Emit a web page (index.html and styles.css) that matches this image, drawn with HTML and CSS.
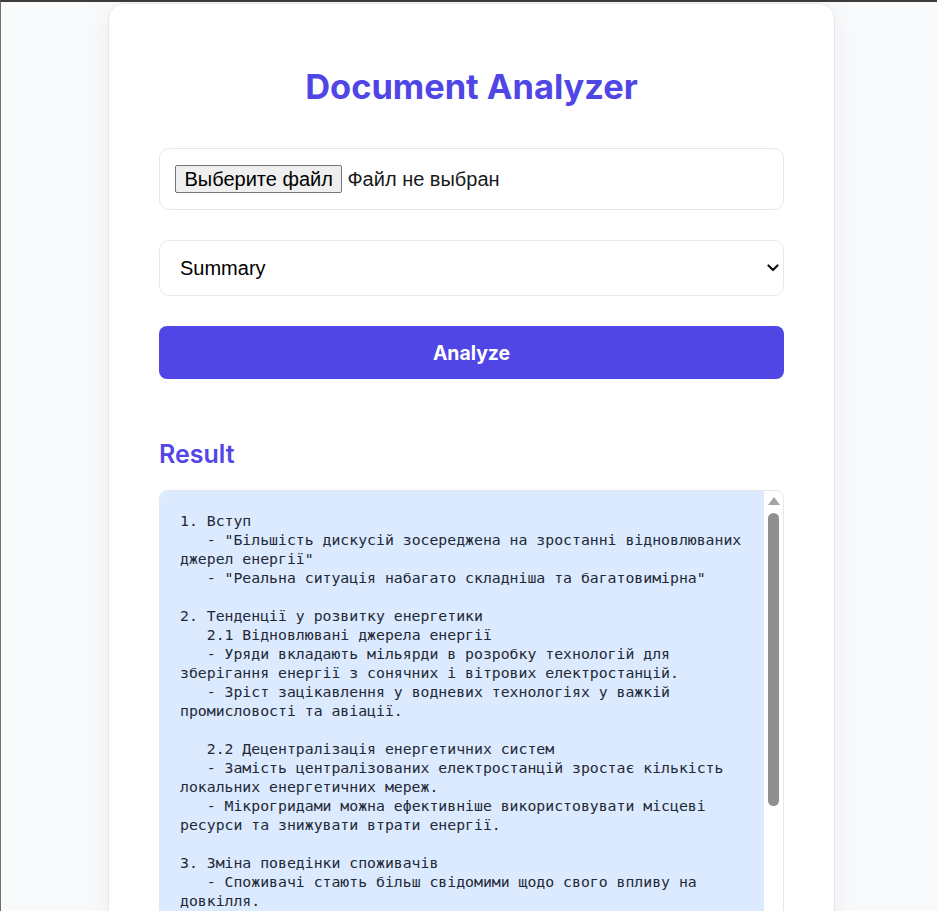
FILE: index.html
```html
<!DOCTYPE html>
<html lang="uk">
<head>
<meta charset="utf-8">
<title>Document Analyzer</title>
<link rel="stylesheet" href="styles.css">
</head>
<body>
<main class="page">
  <section class="card">
    <h1 class="title">Document Analyzer</h1>
    <div class="file-field">
      <label class="file-btn">Выберите файл<input type="file" class="file-input"></label>
      <span class="file-name">Файл не выбран</span>
    </div>
    <div class="select-wrap">
      <select class="select">
        <option>Summary</option>
        <option>Key points</option>
        <option>Outline</option>
      </select>
      <svg class="chevron" width="12" height="8" viewBox="0 0 12 8" aria-hidden="true"><path d="M1.5 1.5 L6 6 L10.5 1.5" fill="none" stroke="#111" stroke-width="2.2" stroke-linecap="round" stroke-linejoin="round"/></svg>
    </div>
    <button class="analyze" type="button">Analyze</button>
    <h2 class="result-title">Result</h2>
    <div class="result">
      <pre class="result-text">1. Вступ
   - "Більшість дискусій зосереджена на зростанні відновлюваних джерел енергії"
   - "Реальна ситуація набагато складніша та багатовимірна"

2. Тенденції у розвитку енергетики
   2.1 Відновлювані джерела енергії
   - Уряди вкладають мільярди в розробку технологій для зберігання енергії з сонячних і вітрових електростанцій.
   - Зріст зацікавлення у водневих технологіях у важкій промисловості та авіації.

   2.2 Децентралізація енергетичних систем
   - Замість централізованих електростанцій зростає кількість локальних енергетичних мереж.
   - Мікрогридами можна ефективніше використовувати місцеві ресурси та знижувати втрати енергії.

3. Зміна поведінки споживачів
   - Споживачі стають більш свідомими щодо свого впливу на довкілля.</pre>
      <div class="scrollbar" aria-hidden="true">
        <span class="scroll-arrow"></span>
        <span class="scroll-thumb"></span>
      </div>
    </div>
  </section>
</main>
</body>
</html>
```
FILE: styles.css
```css
html {
  height: 100%;
  box-sizing: border-box;
  border-top: 2px solid #3b3b3b;
  border-left: 1px solid #6f6f6f;
  background: #f9fafb;
  overflow: hidden;
}

body {
  margin: 0;
  font-family: Inter, "Noto Sans", sans-serif;
  color: #1f2937;
}

.page {
  display: flex;
  justify-content: center;
  padding: 1px 0 0 5px;
}

.card {
  width: 625px;
  padding: 50px 50px 60px;
  background: #ffffff;
  border: 1px solid #e5e7eb;
  border-radius: 16px;
  box-shadow: 0 0 30px rgba(0, 0, 0, 0.05);
  display: flex;
  flex-direction: column;
}

.title {
  margin: 13px 0 41px;
  font-size: 34.4px;
  line-height: 40px;
  font-weight: 700;
  text-align: center;
  color: #4f46e5;
}

.file-field {
  display: flex;
  align-items: center;
  gap: 5px;
  padding: 16px 15px;
  border: 1px solid #e5e7eb;
  border-radius: 10px;
  margin-bottom: 30px;
  font-family: "Liberation Sans", Arial, sans-serif;
  font-size: 20px;
  color: #1a1a1a;
}

.file-btn {
  display: inline-block;
  padding: 1px 8.5px;
  line-height: 24px;
  background: #efefef;
  border: 1px solid #767676;
  border-radius: 2px;
  color: #000;
}

.file-input {
  display: none;
}

.select-wrap {
  position: relative;
  display: flex;
  margin-bottom: 30px;
}

.select {
  flex: 1;
  height: 56px;
  margin: 0;
  padding: 0 36px 0 20px;
  border: 1px solid #e5e7eb;
  border-radius: 10px;
  background: #fff;
  appearance: none;
  -webkit-appearance: none;
  font-family: "Liberation Sans", Arial, sans-serif;
  font-size: 20px;
  color: #000;
}

.chevron {
  position: absolute;
  right: 5px;
  top: 24px;
  pointer-events: none;
}

.analyze {
  height: 53px;
  border: none;
  border-radius: 8px;
  background: #4f46e5;
  color: #fff;
  font-family: Inter, sans-serif;
  font-size: 19.4px;
  font-weight: 700;
}

.result-title {
  margin: 60px 0 21px;
  font-size: 25px;
  line-height: 30px;
  font-weight: 600;
  color: #5346e6;
}

.result {
  display: flex;
  height: 500px;
  overflow: hidden;
  border: 1px solid #e5e7eb;
  border-radius: 8px;
  background: #ffffff;
}

.result-text {
  flex: 1;
  margin: 0;
  padding: 20px;
  background: #dbeafe;
  font-family: "DejaVu Sans Mono", monospace;
  font-size: 14.8px;
  line-height: 19px;
  color: #1f2937;
  white-space: pre-wrap;
}

.scrollbar {
  width: 19px;
  display: flex;
  flex-direction: column;
  align-items: center;
  padding-top: 6px;
  background: #ffffff;
}

.scroll-arrow {
  width: 0;
  height: 0;
  border-left: 6.5px solid transparent;
  border-right: 6.5px solid transparent;
  border-bottom: 8px solid #a3a3a3;
}

.scroll-thumb {
  width: 11px;
  height: 293px;
  margin-top: 8px;
  border-radius: 6px;
  background: #8f8f8f;
}
```
